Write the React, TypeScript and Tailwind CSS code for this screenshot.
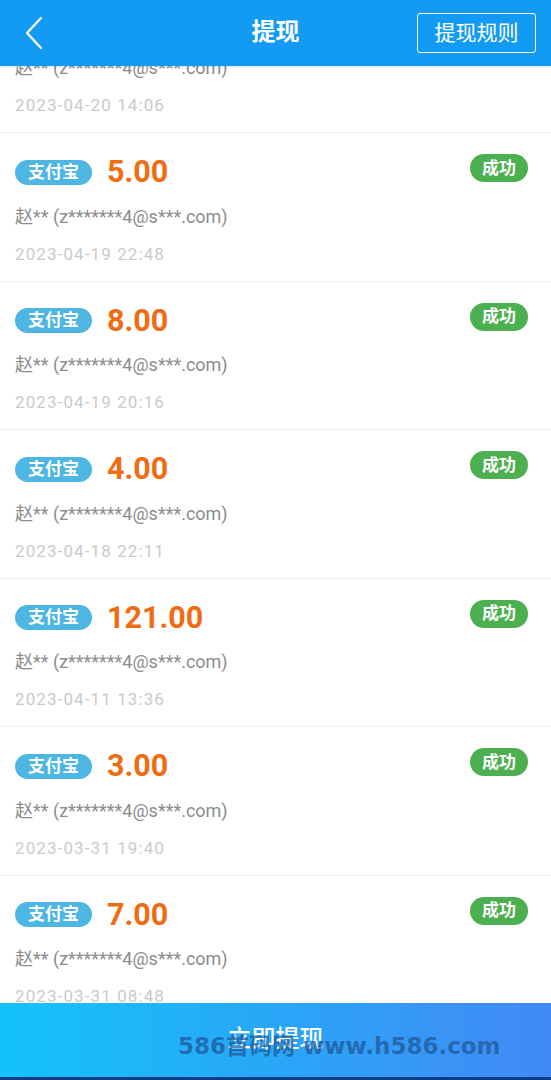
import React from 'react';

type Record = { amount: string; time: string };

const records: Record[] = [
  { amount: '6.00', time: '2023-04-20 14:06' },
  { amount: '5.00', time: '2023-04-19 22:48' },
  { amount: '8.00', time: '2023-04-19 20:16' },
  { amount: '4.00', time: '2023-04-18 22:11' },
  { amount: '121.00', time: '2023-04-11 13:36' },
  { amount: '3.00', time: '2023-03-31 19:40' },
  { amount: '7.00', time: '2023-03-31 08:48' },
];

const font = { fontFamily: 'Roboto, "Noto Sans CJK SC", "Noto Sans", sans-serif' };

function RecordRow({ item }: { item: Record }) {
  return (
    <div className="h-[148.5px] shrink-0 border-b border-[#ececec] bg-white px-[15px] pt-[24px]">
      <div className="flex items-start justify-between">
        <div className="flex items-center gap-[15px]">
          <span className="flex h-[25px] w-[77px] items-center justify-center rounded-full bg-[#4db6e2] text-[17px] font-bold leading-none text-white">
            支付宝
          </span>
          <span className="text-[30.5px] font-bold leading-none text-[#ef6c12]">{item.amount}</span>
        </div>
        <span className="mr-[8px] mt-[-3px] flex h-[28px] w-[58px] items-center justify-center rounded-full bg-[#4caf50] text-[17px] font-bold leading-none text-white">
          成功
        </span>
      </div>
      <div className="mt-[19px] text-[18px] leading-[20px] text-[#8c8c8c]">赵** (z*******4@s***.com)</div>
      <div className="mt-[17px] text-[17px] leading-[20px] tracking-[1.1px] text-[#cacaca]">{item.time}</div>
    </div>
  );
}

export default function App() {
  return (
    <div className="relative flex h-[1080px] w-[551px] flex-col overflow-hidden bg-white" style={font}>
      {/* 顶部导航 */}
      <header className="relative z-10 flex h-[66px] shrink-0 items-center justify-between bg-[#139bf4] pl-[24px] pr-[15px] shadow-[0_1px_2px_rgba(0,0,0,0.12)]">
        <svg width="20" height="34" viewBox="0 0 20 34" fill="none">
          <path d="M17 2 L3 17 L17 32" stroke="white" strokeWidth="2.2" strokeLinecap="round" strokeLinejoin="round" />
        </svg>
        <h1 className="absolute left-1/2 top-[14px] -translate-x-1/2 text-[24px] font-bold leading-[36px] text-white">提现</h1>
        <button className="flex h-[40px] w-[119px] items-center justify-center rounded-[3px] border-[1.5px] border-white text-[21px] leading-none text-white">
          提现规则
        </button>
      </header>

      {/* 记录列表 */}
      <main className="flex-1 overflow-hidden">
        <div className="mt-[-81.5px] flex flex-col">
          {records.map((item, i) => (
            <RecordRow key={i} item={item} />
          ))}
        </div>
      </main>

      {/* 底部按钮 */}
      <div className="relative flex h-[77px] shrink-0 flex-col">
        <button className="flex flex-1 items-center justify-center bg-gradient-to-r from-[#12c3f8] via-[#28a6f7] to-[#4189f5] pb-[2px] text-[24px] font-medium text-white">
          立即提现
        </button>
        <div className="h-[3px] bg-[#0b3d84]" />
        <div
          className="pointer-events-none absolute left-[178px] top-[29px] whitespace-nowrap text-[23px] font-bold leading-[28px] text-[#1d5a9c]/75"
          style={{ fontFamily: '"DejaVu Sans", "Noto Sans CJK SC", sans-serif' }}
        >
          586首码网 www.h586.com
        </div>
      </div>
    </div>
  );
}
